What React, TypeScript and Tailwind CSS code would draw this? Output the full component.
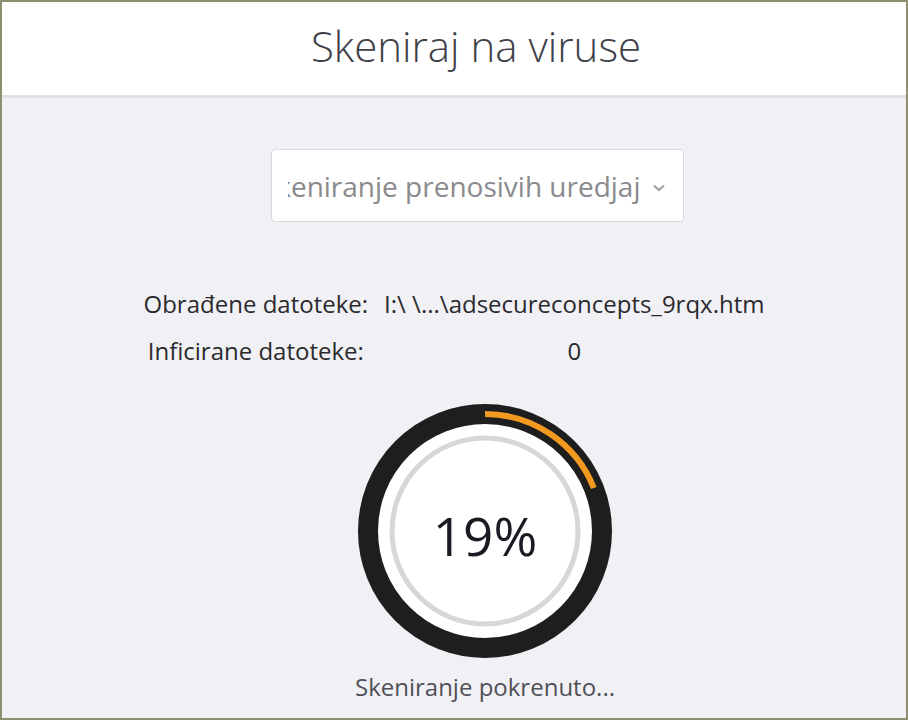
import React from "react";

export default function App() {
  const pct = 19;
  const r = 117;
  const circ = 2 * Math.PI * r;
  return (
    <div
      className="w-[908px] h-[720px] border-2 border-[#8e8f6e] bg-[#f1f1f5] flex flex-col overflow-hidden"
      style={{ fontFamily: '"Open Sans", "Noto Sans", sans-serif' }}
    >
      <div className="h-[96px] shrink-0 bg-white border-b-[3px] border-[#e3e3e6] flex items-center justify-center pl-[44px]">
        <h1 className="text-[42px] font-light text-[#404048] leading-none -mt-[6px]">
          Skeniraj na viruse
        </h1>
      </div>

      <div className="flex justify-center pl-[46px] mt-[51px]">
        <div className="w-[413px] h-[73px] bg-white border border-[#d9d9dd] rounded-[4px] flex items-center pl-[16px] pr-[16px]">
          <div className="w-[353px] overflow-hidden flex justify-end whitespace-nowrap">
            <span className="text-[28px] text-[#8a8a8e] leading-[36px]">
              Skeniranje prenosivih uredjaj
            </span>
          </div>
          <svg width="16" height="12" viewBox="0 0 16 12" className="ml-auto mt-[4px]">
            <path d="M3 3.5 L8 8 L13 3.5" fill="none" stroke="#a0a0a6" strokeWidth="2.2" />
          </svg>
        </div>
      </div>

      <div className="flex justify-center mt-[58px]">
        <table className="text-[24px] text-[#2a2a2e] leading-none border-collapse">
          <tbody>
            <tr className="h-[47px]">
              <td className="text-center pr-[16px] align-middle">Obrađene datoteke:</td>
              <td className="text-center align-middle">I:\ \...\adsecureconcepts_9rqx.htm</td>
            </tr>
            <tr className="h-[47px]">
              <td className="text-center pr-[16px] align-middle">Inficirane datoteke:</td>
              <td className="text-center align-middle">0</td>
            </tr>
          </tbody>
        </table>
      </div>

      <div className="flex justify-center pl-[62px] mt-[29px]">
        <div className="relative w-[256px] h-[256px]">
          <svg width="256" height="256" viewBox="0 0 256 256">
            <circle cx="128" cy="128" r="107" fill="#ffffff" />
            <circle cx="128" cy="128" r={r} fill="none" stroke="#1e1e1e" strokeWidth="20" />
            <circle
              cx="128"
              cy="128"
              r={r}
              fill="none"
              stroke="#f29a1f"
              strokeWidth="6"
              strokeDasharray={`${(pct / 100) * circ} ${circ}`}
              transform="rotate(-90 128 128)"
            />
            <circle cx="128" cy="128" r="93" fill="none" stroke="#d7d7da" strokeWidth="5" />
          </svg>
          <div className="absolute inset-0 flex items-center justify-center">
            <span className="text-[53px] text-[#1a1a22] leading-none mt-[8px]">{pct}%</span>
          </div>
        </div>
      </div>

      <div className="flex justify-center pl-[62px] mt-[16px]">
        <span className="text-[24px] text-[#505058] leading-none">Skeniranje pokrenuto...</span>
      </div>
    </div>
  );
}
